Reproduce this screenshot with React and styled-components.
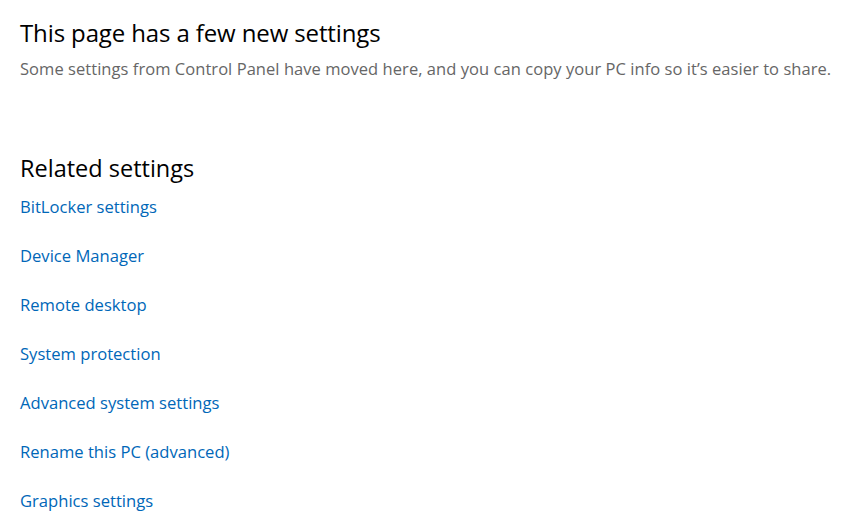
import React from "react";
import styled, { createGlobalStyle } from "styled-components";

const Global = createGlobalStyle`
  html, body { margin: 0; padding: 0; background: #ffffff; }
  body { font-family: "Open Sans", "Noto Sans", sans-serif; }
`;

const Page = styled.div`
  padding: 17px 0 0 20px;
  display: flex;
  flex-direction: column;
`;

const Title = styled.h2`
  margin: 0;
  font-weight: 400;
  font-size: 24px;
  line-height: 32px;
  color: #000;
  letter-spacing: -0.12px;
  white-space: nowrap;
`;

const Subtitle = styled.p`
  margin: 9px 0 0;
  font-size: 16.5px;
  line-height: 22px;
  color: #666666;
  letter-spacing: 0.05px;
  white-space: nowrap;
`;

const SectionTitle = styled.h3`
  margin: 73px 0 0;
  font-weight: 400;
  font-size: 23.5px;
  line-height: 30px;
  color: #000;
  white-space: nowrap;
`;

const LinkList = styled.div`
  display: flex;
  flex-direction: column;
  gap: 27px;
  margin-top: 13px;
`;

const SettingLink = styled.a`
  font-size: 16.6px;
  line-height: 22px;
  color: #0067b8;
  text-decoration: none;
  cursor: pointer;
  align-self: flex-start;
  white-space: nowrap;
`;

const links = [
  "BitLocker settings",
  "Device Manager",
  "Remote desktop",
  "System protection",
  "Advanced system settings",
  "Rename this PC (advanced)",
  "Graphics settings",
];

export default function App() {
  return (
    <>
      <Global />
      <Page>
        <Title>This page has a few new settings</Title>
        <Subtitle>
          Some settings from Control Panel have moved here, and you can copy your PC info so it’s easier to share.
        </Subtitle>
        <SectionTitle>Related settings</SectionTitle>
        <LinkList>
          {links.map((l) => (
            <SettingLink key={l}>{l}</SettingLink>
          ))}
        </LinkList>
      </Page>
    </>
  );
}
